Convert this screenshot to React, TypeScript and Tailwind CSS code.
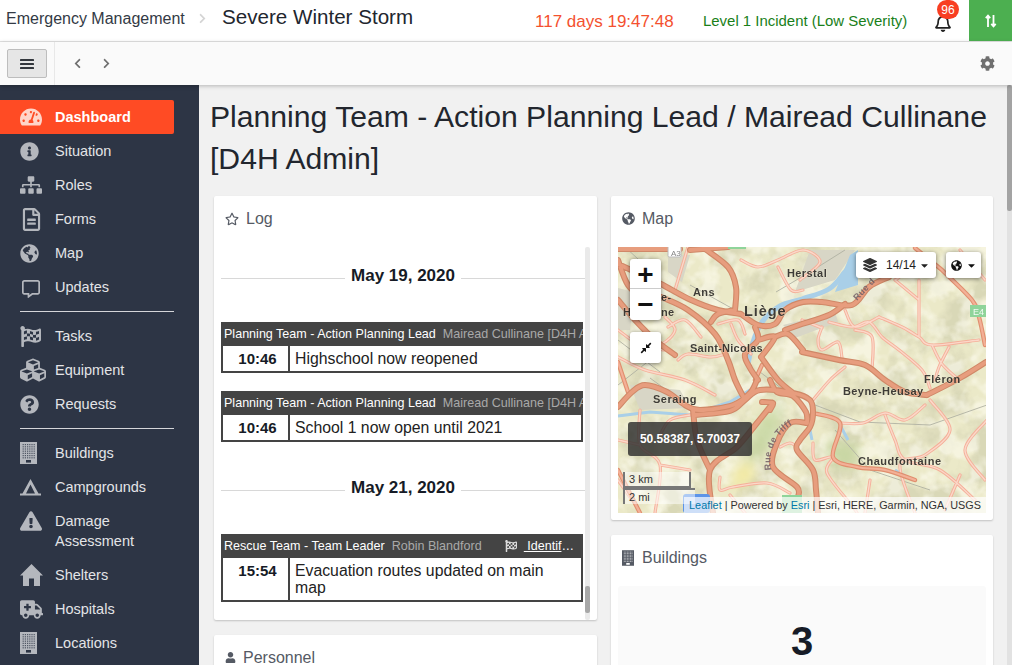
import React from "react";
import {
  FaTachometerAlt, FaInfoCircle, FaSitemap, FaRegFileAlt, FaGlobeAmericas, FaRegCommentAlt,
  FaFlagCheckered, FaCubes, FaQuestionCircle, FaExclamationTriangle, FaAmbulance,
  FaRegStar, FaUser, FaLayerGroup, FaCog, FaRegBell, FaCompressAlt, FaCaretDown, FaChevronLeft, FaChevronRight,
} from "react-icons/fa";

const Building = ({ w = 17, h = 22, bg = "#b4b7bd", fg = "#2d3545" }: { w?: number; h?: number; bg?: string; fg?: string }) => {
  const cells: React.ReactNode[] = [];
  for (let r = 0; r < 7; r++) for (let c = 0; c < 6; c++) cells.push(<rect key={`${r}-${c}`} x={2.6 + c * 2.2} y={2 + r * 2.2} width={1.2} height={1.2} fill={fg} opacity={0.75} />);
  return (
    <svg width={w} height={h} viewBox="0 0 17 22">
      <rect width="17" height="22" fill={bg} />
      {cells}
      <rect x="6" y="18" width="5" height="2.6" fill={fg} />
    </svg>
  );
};

const Tent = () => (
  <svg width="21" height="17" viewBox="0 0 21 17">
    <path fillRule="evenodd" fill="#b4b7bd" d="M10.5 0 L18.5 14.5 H21 V16.5 H0 V14.5 H2.5 Z M10.5 5.5 L6 14.5 H15 Z" />
  </svg>
);

const House = () => (
  <svg width="23" height="22" viewBox="0 0 23 22">
    <path fill="#b4b7bd" d="M11.5 0 L23 11.5 H20 V22 H14 V14.5 H9 V22 H3 V11.5 H0 Z" />
  </svg>
);

type Item = { label: string; icon: React.ReactNode; active?: boolean };
const gray = "#b4b7bd";
const top: Item[] = [
  { label: "Dashboard", active: true, icon: <FaTachometerAlt size={22} color="#ffd5c9" /> },
  { label: "Situation", icon: <FaInfoCircle size={19} color={gray} /> },
  { label: "Roles", icon: <FaSitemap size={22} color={gray} /> },
  { label: "Forms", icon: <FaRegFileAlt size={23} color={gray} /> },
  { label: "Map", icon: <FaGlobeAmericas size={19} color={gray} /> },
  { label: "Updates", icon: <span className="block mt-1 ml-[2px]"><FaRegCommentAlt size={18} color={gray} /></span> },
];
const mid: Item[] = [
  { label: "Tasks", icon: <FaFlagCheckered size={21} color={gray} /> },
  { label: "Equipment", icon: <FaCubes size={26} color={gray} /> },
  { label: "Requests", icon: <FaQuestionCircle size={19} color={gray} /> },
];
const low: Item[] = [
  { label: "Buildings", icon: <Building /> },
  { label: "Campgrounds", icon: <Tent /> },
  { label: "Damage Assessment", icon: <FaExclamationTriangle size={22} color={gray} /> },
  { label: "Shelters", icon: <House /> },
  { label: "Hospitals", icon: <FaAmbulance size={23} color={gray} /> },
  { label: "Locations", icon: <Building /> },
];

const NavItem = ({ item }: { item: Item }) => (
  <div className={`flex w-[174px] py-[7px] pl-5 rounded-r-[2px] text-[14.5px] leading-5 ${item.active ? "bg-[#ff4b24] font-bold text-white" : "text-[#e3e4e7]"}`}>
    <span className="w-[35px] h-5 shrink-0 flex items-center justify-start">{item.icon}</span>
    <span className="w-[110px]">{item.label}</span>
  </div>
);

const Sep = () => (
  <div className="h-[15px] flex items-center pl-5 w-[174px]"><div className="h-px w-full bg-[#d5d6d9]" /></div>
);

const DateRow = ({ text }: { text: string }) => (
  <div className="relative h-6 flex justify-center">
    <div className="absolute left-0 right-0 top-[12px] h-px bg-[#d8d8d8]" />
    <span className="relative bg-white px-[6px] h-5 text-[17px] leading-5 font-bold text-[#161b26]">{text}</span>
  </div>
);

const Entry = ({ role, name, time, children, extra }: { role: string; name: string; time: string; children: React.ReactNode; extra?: React.ReactNode }) => (
  <div className="w-[362px]">
    <div className="h-6 flex items-center bg-[#444444] pl-[3px] pr-[9px] text-[12.55px] text-white whitespace-nowrap overflow-hidden">
      <span>{role}</span>
      <span className="ml-[7px] text-[#a9a9a9]">{name}</span>
      {extra}
    </div>
    <div className="flex border-2 border-t-0 border-[#444444] bg-white">
      <div className="w-[67px] shrink-0 border-r-2 border-[#444444] text-center pl-[4px] text-[15px] font-bold text-[#161b26] pt-[3px] leading-[20px]">{time}</div>
      <div className="flex-1 text-[15.8px] leading-[17px] text-[#222] pl-[5px] pr-2 pt-[4px] pb-[4px]">{children}</div>
    </div>
  </div>
);

const Card = ({ icon, title, iconW, className, children }: { icon: React.ReactNode; title: string; iconW: string; className?: string; children?: React.ReactNode }) => (
  <div className={`bg-white rounded-[2px] shadow-[0_1px_2px_rgba(0,0,0,0.2)] ${className ?? ""}`}>
    <div className="h-[51px] pl-[11px] pb-[6px] flex items-center text-[16px] text-[#555a64]">
      <span className={`${iconW} flex items-center`}>{icon}</span>
      <span>{title}</span>
    </div>
    {children}
  </div>
);

type P = [number, number];
const smooth = (pts: P[]) => {
  let d = `M${pts[0][0]} ${pts[0][1]}`;
  for (let i = 0; i < pts.length - 1; i++) {
    const p0 = pts[Math.max(i - 1, 0)], p1 = pts[i], p2 = pts[i + 1], p3 = pts[Math.min(i + 2, pts.length - 1)];
    const c1 = [p1[0] + (p2[0] - p0[0]) / 6, p1[1] + (p2[1] - p0[1]) / 6];
    const c2 = [p2[0] - (p3[0] - p1[0]) / 6, p2[1] - (p3[1] - p1[1]) / 6];
    d += ` C${c1[0].toFixed(1)} ${c1[1].toFixed(1)} ${c2[0].toFixed(1)} ${c2[1].toFixed(1)} ${p2[0]} ${p2[1]}`;
  }
  return d;
};
const toD = (lines: P[][]) => lines.map(smooth).join(" ");

const bigRoads = toD([
  [[618,264],[640,274],[661,284],[691,300],[718,310],[741,314]],
  [[661,297],[688,310],[715,334],[728,360],[735,380],[745,400]],
  [[618,249],[680,249]], [[690,250],[728,247]],
  [[705,249],[728,267],[736,287],[735,310]],
  [[735,310],[718,314],[711,322]],
  [[741,314],[758,325],[775,324],[785,310],[803,302],[822,302],[852,305],[869,287],[889,277]],
  [[775,337],[788,334],[803,350]],
  [[755,327],[758,340],[745,354],[750,368],[758,380]],
  [[761,357],[778,380],[793,393]],
  [[758,340],[775,337],[761,357]],
  [[802,324],[829,315],[845,304]],
  [[785,330],[802,324]],
  [[802,352],[839,360],[865,365],[885,380],[905,392],[927,395]],
  [[927,395],[960,378],[986,362]],
  [[618,407],[632,392],[645,385],[667,392],[685,405],[700,410],[733,405],[750,393],[757,380]],
  [[695,415],[730,411],[745,400],[760,390],[793,393],[810,400],[813,413],[810,427],[800,440],[797,450],[813,470],[816,490],[818,513]],
  [[770,380],[777,392],[793,396],[806,412],[807,423]],
  [[773,403],[757,423],[737,447],[710,470],[713,513]],
  [[762,402],[773,403],[770,410]],
  [[693,410],[697,440],[710,470]],
  [[807,423],[790,423],[777,443],[773,467],[797,487],[798,497]],
  [[618,300],[635,320],[655,340],[675,355]],
  [[618,260],[628,285],[645,300]],
]);
const midRoads = toD([
  [[942,270],[972,300],[979,317],[985,345]],
  [[915,248],[942,270]],
  [[813,413],[840,423],[833,457],[857,467],[885,470],[915,480]],
  [[618,362],[628,392]],
  [[618,470],[640,513]],
  [[755,380],[762,365]],
]);
const lightRoads = toD([
  [[879,317],[902,327],[919,337],[932,345],[979,340]],
  [[919,280],[919,337]],
  [[845,310],[855,327],[879,317]],
  [[829,322],[852,327],[869,322],[882,337],[899,350],[922,370],[930,388]],
  [[855,330],[872,337],[872,370]],
  [[932,345],[942,364],[959,380]],
  [[949,347],[939,367],[935,380]],
  [[802,320],[822,328]],
  [[895,280],[919,300]],
  [[822,327],[818,340],[822,350],[838,342],[842,358]],
  [[665,317],[675,330],[661,344],[640,340]],
  [[668,327],[685,320],[701,337]],
  [[718,324],[738,320],[745,334]],
  [[731,324],[738,340],[751,354]],
  [[678,360],[688,354],[711,357],[725,354]],
  [[618,357],[645,370],[685,380],[715,395]],
  [[688,247],[678,280],[675,290]],
  [[741,260],[758,267],[778,260],[803,250],[820,262],[800,280]],
  [[778,267],[791,290],[803,290]],
  [[813,443],[815,460],[833,457],[827,473],[853,507],[857,513]],
  [[780,447],[790,443],[797,447]],
  [[720,477],[720,490],[733,487],[767,483],[790,493]],
  [[840,423],[863,423],[885,413],[905,420],[925,405]],
  [[813,400],[830,380],[845,367]],
  [[885,415],[895,440],[905,460],[940,470],[975,500]],
  [[930,400],[950,430],[925,455],[900,465],[915,513]],
  [[987,420],[965,450],[985,480]],
  [[640,410],[640,445],[660,465],[655,513]],
  [[618,440],[640,445]],
  [[660,465],[690,470]],
  [[618,330],[640,345],[665,350]],
  [[870,480],[865,513]],
  [[945,510],[960,475]],
  [[960,250],[985,280]],
  [[890,262],[900,275],[895,280]],
  [[690,415],[670,420],[660,435]],
  [[618,480],[632,500]],
  [[730,495],[745,513]],
]);

const MapArt = () => (
  <svg viewBox="618 247 368 266" width="368" height="266" className="block">
    <defs>
      <filter id="soft" x="-5%" y="-5%" width="110%" height="110%"><feGaussianBlur stdDeviation="0.55" /></filter>
      <filter id="hill" x="-10%" y="-10%" width="120%" height="120%"><feGaussianBlur stdDeviation="6" /></filter>
      <filter id="shade" x="0" y="0" width="100%" height="100%">
        <feTurbulence type="fractalNoise" baseFrequency="0.035" numOctaves="4" seed="7" />
        <feColorMatrix type="matrix" values="0 0 0 0 0.62  0 0 0 0 0.61  0 0 0 0 0.42  2.6 -2.6 0 0 0.35" />
      </filter>
      <filter id="light" x="0" y="0" width="100%" height="100%">
        <feTurbulence type="fractalNoise" baseFrequency="0.05" numOctaves="3" seed="21" />
        <feColorMatrix type="matrix" values="0 0 0 0 1  0 0 0 0 0.99  0 0 0 0 0.9  3 -3 0 0 0.25" />
      </filter>
      <path id="tilff" d="M771 470 C768 450 776 432 800 420" />
      <path id="rue" d="M857 301 L880 277" />
    </defs>
    <rect x="618" y="247" width="368" height="266" fill="#ebe9c8" />
    <rect x="618" y="247" width="368" height="266" filter="url(#shade)" opacity="0.6" />
    <rect x="618" y="247" width="368" height="266" filter="url(#light)" opacity="0.55" />
    <g filter="url(#hill)">
      <path fill="#c5d6a0" opacity="0.85" d="M752 425 L782 400 L778 440 L745 470 Z M826 440 L860 445 L855 468 L830 465 Z" />
      <path fill="#f2e9a0" d="M735 470 L750 460 L755 480 L730 490 Z" />
    </g>
    <g filter="url(#soft)">
      <path fill="#d8d6c6" d="M618 288 L634 292 L630 330 L618 330 Z M668 255 L690 255 L682 282 L668 272 Z M783 325 L835 312 L838 322 L795 338 Z M630 385 L680 390 L690 408 L640 410 Z M810 250 L855 250 L835 280 L795 292 Z" />
      <path fill="none" stroke="#a9cfe8" strokeWidth="5" strokeLinecap="round" d={smooth([[856,258],[845,272],[829,289],[802,299],[780,306],[762,322],[752,345],[748,365]])} />
      <path fill="#a9cfe8" d="M850 255 L858 250 L858 285 L835 292 Z" />
      <path fill="none" stroke="#a9cfe8" strokeWidth="3" d="M750 390 L730 402 L690 415 L650 412 L618 416 M808 420 L812 440 M840 425 L848 440 M895 470 L905 476" />
      <path fill="none" stroke="#b0b1a3" strokeWidth="0.9" d="M776 292 L810 272 L845 250 M760 372 L790 395 M618 385 L650 360 M815 405 L860 422 L930 425 L987 405 M835 430 L870 470 L930 490 M650 378 L680 400 M625 247 L650 270 M690 285 L735 310 M618 340 L660 372" />
      <path fill="none" stroke="#f5b09a" strokeWidth="3.2" strokeLinecap="round" strokeLinejoin="round" d={lightRoads} />
      <path fill="none" stroke="#fbd8c9" strokeWidth="1.4" strokeLinecap="round" strokeLinejoin="round" d={lightRoads} />
      <path fill="none" stroke="#e08f6e" strokeWidth="4.4" strokeLinecap="round" strokeLinejoin="round" d={midRoads} />
      <path fill="none" stroke="#f3b097" strokeWidth="2.2" strokeLinecap="round" strokeLinejoin="round" d={midRoads} />
      <path fill="none" stroke="#d08867" strokeWidth="6" strokeLinecap="round" strokeLinejoin="round" d={bigRoads} />
      <path fill="none" stroke="#e79d7e" strokeWidth="3.8" strokeLinecap="round" strokeLinejoin="round" d={bigRoads} />
      <rect x="668" y="246" width="13" height="11" rx="1.5" fill="#fff" stroke="#bbb" />
      <path fill="#8fd49a" d="M970 305 H986 V317 H970 Z M728 246 H746 V249 H728 Z M782 495 H802 V513 H782 Z" />
      <rect x="683" y="494" width="27" height="19" rx="3" fill="#5b94e8" />
    </g>
    <g fontFamily="'Liberation Sans', sans-serif" fontWeight="700" fill="#2d2b29" stroke="#f4f0d4" strokeWidth="0.5" paintOrder="stroke" opacity="0.9">
      <text x="671" y="255.5" fontSize="8" fontWeight="400" stroke="none" fill="#777">A3</text>
      <text x="973" y="315" fontSize="9" fontWeight="400" stroke="none" fill="#fff">E4</text>
      <text x="787" y="277" fontSize="11" letterSpacing="0.4">Herstal</text>
      <text x="693" y="296" fontSize="11" letterSpacing="0.4">Ans</text>
      <text x="744" y="316" fontSize="14.5" letterSpacing="0.9">Liège</text>
      <text x="690" y="352" fontSize="11" letterSpacing="0.25">Saint-Nicolas</text>
      <text x="661" y="301" fontSize="11" letterSpacing="0.4">e-</text>
      <text x="623" y="316" fontSize="11" letterSpacing="0.4">He</text>
      <text x="661" y="316" fontSize="11" letterSpacing="0.4">ne</text>
      <text x="653" y="403" fontSize="11" letterSpacing="0.5">Seraing</text>
      <text x="843" y="395" fontSize="11" letterSpacing="0.4">Beyne-Heusay</text>
      <text x="924" y="383" fontSize="11" letterSpacing="0.5">Fléron</text>
      <text x="858" y="465" fontSize="11" letterSpacing="0.5">Chaudfontaine</text>
      <text fontSize="9" fill="#77636a" stroke="none" letterSpacing="0.4"><textPath href="#tilff">Rue de Tilff</textPath></text>
      <text fontSize="9" fill="#77636a" stroke="none" letterSpacing="0.4"><textPath href="#rue">Rue d</textPath></text>
    </g>
  </svg>
);

const Overlay = ({ className, children }: { className: string; children: React.ReactNode }) => (
  <div className={`absolute bg-white rounded-[3px] shadow-[0_1px_4px_rgba(0,0,0,0.5)] ${className}`}>{children}</div>
);

export default function App() {
  return (
    <div className="w-[1012px] h-[665px] overflow-hidden flex flex-col font-['Liberation_Sans',sans-serif] bg-[#f1f1f1]">
      <header className="h-[42px] shrink-0 flex bg-white border-b border-[#e4e4e4]">
        <div className="pl-[6px] w-[197px] pb-[4px] flex items-center text-[16px] text-[#333a45]">Emergency Management</div>
        <div className="w-[25px] pb-[4px] flex items-center"><FaChevronRight size={11} color="#d4d4d4" /></div>
        <div className="text-[20.6px] leading-[33px] text-[#22262e] w-[313px]">Severe Winter Storm</div>
        <div className="text-[17px] text-[#f4512f] w-[168px] flex items-center pt-[2px]">117 days 19:47:48</div>
        <div className="text-[14.95px] text-[#1a7f1a] w-[231px] flex items-center pt-[2px]">Level 1 Incident (Low Severity)</div>
        <div className="relative w-[35px] flex items-center pt-[4px]">
          <FaRegBell size={18} color="#222" />
          <span className="absolute left-[3px] top-0 w-[22px] h-[19px] rounded-full bg-[#f83e22] text-white text-[12px] flex items-center justify-center">96</span>
        </div>
        <div className="w-[43px] h-[41px] bg-[#4caf50] flex items-center justify-center">
          <svg width="12" height="14" viewBox="0 0 12 14" fill="none" stroke="#fff" strokeWidth="1.8">
            <path d="M3 13V2M.8 4.2 3 1.6l2.2 2.6" />
            <path d="M8.5 1v11M6.3 9.8l2.2 2.6 2.2-2.6" />
          </svg>
        </div>
      </header>
      <div className="h-[43px] shrink-0 flex items-center bg-[#fafafa] shadow-[0_1px_4px_rgba(0,0,0,0.25)] relative z-10">
        <div className="ml-[7px] w-[40px] h-[29px] bg-[#e6e6e6] border border-[#bdbdbd] rounded-[2px] flex items-center justify-center">
          <svg width="14" height="10" viewBox="0 0 14 10" fill="#33373d"><rect width="14" height="2" rx="0.6" /><rect y="4" width="14" height="2" rx="0.6" /><rect y="8" width="14" height="2" rx="0.6" /></svg>
        </div>
        <div className="ml-[7px] w-px h-full bg-[#e8e8e8]" />
        <div className="ml-[17px] w-[29px]"><FaChevronLeft size={11} color="#6f6f6f" /></div>
        <div><FaChevronRight size={11} color="#6f6f6f" /></div>
        <div className="ml-auto mr-[17px]"><FaCog size={15} color="#6f6f6f" /></div>
      </div>
      <div className="flex-1 min-h-0 flex">
        <nav className="w-[199px] shrink-0 bg-[#2d3545] pt-[15px] overflow-hidden">
          {top.map((i) => <NavItem key={i.label} item={i} />)}
          <Sep />
          {mid.map((i) => <NavItem key={i.label} item={i} />)}
          <Sep />
          {low.map((i) => <NavItem key={i.label} item={i} />)}
        </nav>
        <main className="flex-1 min-w-0 overflow-hidden">
          <h1 className="pl-[11px] pt-[11px] text-[30.15px] leading-[42px] text-[#22262e] w-[800px]">
            Planning Team - Action Planning Lead / Mairead Cullinane [D4H Admin]
          </h1>
          <div className="flex gap-[14px] pl-[15px] pt-[16px] items-start">
            <div className="w-[383px] flex flex-col gap-[15px]">
              <Card icon={<FaRegStar size={14} color="#555a64" />} iconW="w-[21px]" title="Log">
                <div className="relative h-[373px] ml-[7px] overflow-hidden">
                  <div className="w-[364px] pt-[19px]">
                    <DateRow text="May 19, 2020" />
                    <div className="mt-[32px] flex flex-col gap-[18px]">
                      <Entry role="Planning Team - Action Planning Lead" name="Mairead Cullinane [D4H Admin]" time="10:46">Highschool now reopened</Entry>
                      <Entry role="Planning Team - Action Planning Lead" name="Mairead Cullinane [D4H Admin]" time="10:46">School 1 now open until 2021</Entry>
                    </div>
                    <div className="mt-[36px]"><DateRow text="May 21, 2020" /></div>
                    <div className="mt-[32px]">
                      <Entry role="Rescue Team - Team Leader" name="Robin Blandford" time="15:54" extra={
                        <span className="ml-auto flex items-center gap-[7px]"><FaFlagCheckered size={12} color="#ddd" /><span className="underline">&nbsp;Identif</span><span className="-ml-[7px]">…</span></span>
                      }>Evacuation routes updated on main map</Entry>
                    </div>
                  </div>
                  <div className="absolute left-[364px] top-0 w-[5px] h-full bg-[#eaeaea] rounded-[2px]">
                    <div className="absolute top-[339px] h-[27px] w-full rounded-[2px] bg-[#a8a8a8]" />
                  </div>
                </div>
              </Card>
              <Card icon={<FaUser size={11} color="#555a64" />} iconW="w-[18px]" title="Personnel" className="h-[120px]" />
            </div>
            <div className="w-[382px] flex flex-col gap-[15px]">
              <Card icon={<FaGlobeAmericas size={13} color="#555a64" />} iconW="w-[20px]" title="Map" className="h-[324px]">
                <div className="relative w-[368px] h-[266px] ml-[7px] overflow-hidden">
                  <MapArt />
                  <Overlay className="left-[12px] top-[12px] w-[31px] h-[61px] flex flex-col">
                    <div className="h-[30px] pt-[2px] border-b border-[#ccc] flex items-center justify-center text-[28px] leading-none font-bold text-[#111]">+</div>
                    <div className="flex-1 flex items-center justify-center text-[28px] leading-none font-bold text-[#111]">−</div>
                  </Overlay>
                  <Overlay className="left-[12px] top-[85px] w-[31px] h-[31px] flex items-center justify-center"><FaCompressAlt size={12} color="#111" /></Overlay>
                  <Overlay className="left-[238px] top-[5px] w-[80px] h-[26px] flex items-center pl-[7px] text-[12px] text-[#222]">
                    <FaLayerGroup size={14} color="#333" /><span className="ml-[9px]">14/14</span><FaCaretDown size={11} className="ml-[3px]" />
                  </Overlay>
                  <Overlay className="left-[328px] top-[5px] w-[35px] h-[26px] flex items-center pl-[5px] text-[#111]">
                    <FaGlobeAmericas size={11} /><FaCaretDown size={11} className="ml-[4px]" />
                  </Overlay>
                  <div className="absolute left-[10px] top-[175px] w-[124px] h-[34px] rounded-[3px] bg-[rgba(45,45,45,0.82)] flex items-center justify-center text-[12px] font-bold text-white">50.58387, 5.70037</div>
                  <div className="absolute left-[5px] top-[225px] w-[68px] h-[16px] border-l-2 border-r-2 border-b-2 border-[#777] bg-white/50 text-[11px] leading-[15px] pl-[4px] text-[#333]">3 km</div>
                  <div className="absolute left-[5px] top-[241px] w-[72px] h-[16px] border-l-2 border-t-2 border-[#777] bg-white/50 text-[11px] leading-[15px] pl-[4px] text-[#333]">2 mi</div>
                  <div className="absolute right-0 bottom-0 h-[16px] pl-[5px] pr-[5px] bg-white/70 text-[10.85px] leading-[16px] text-[#333] whitespace-nowrap">
                    <span className="text-[#0078a8]">Leaflet</span> | Powered by <span className="text-[#0078a8]">Esri</span> | Esri, HERE, Garmin, NGA, USGS
                  </div>
                </div>
              </Card>
              <Card icon={<Building w={12} h={16} bg="#555a64" fg="#ffffff" />} iconW="w-[20px]" title="Buildings" className="h-[140px]">
                <div className="ml-[7px] w-[368px] h-[89px] rounded-t-[3px] bg-[#fafafa] pt-[32px] text-center text-[40px] leading-[46px] font-bold text-[#161b26]">3</div>
              </Card>
            </div>
          </div>
        </main>
        <div className="w-[5px] shrink-0 bg-[#e2e2e2]"><div className="h-[126px] rounded-[2px] bg-[#a3a3a3]" /></div>
      </div>
    </div>
  );
}
